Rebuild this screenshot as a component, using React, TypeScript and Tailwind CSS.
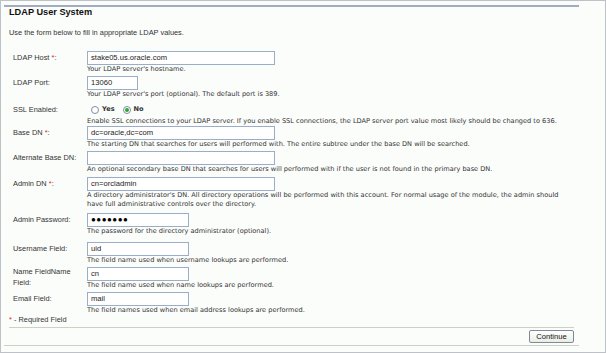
import React from 'react';

const label = "w-[74px] shrink-0 leading-[11px] pt-[1px] text-[7.4px] text-[#333] font-['Liberation_Sans',Arial,sans-serif]";
const hint = "text-[6.6px] leading-[9px] text-[#333] font-['DejaVu_Sans',Verdana,sans-serif] whitespace-nowrap";
const input =
  "h-[14px] border border-[#9aaec8] bg-white px-[3px] text-[7.6px] leading-[12px] text-[#222] font-['Liberation_Sans',Arial,sans-serif]";

function Req() {
  return <span className="text-[#e02020]">*</span>;
}

function Row({
  name,
  required,
  width,
  value,
  help,
  className = '',
}: {
  name: React.ReactNode;
  required?: boolean;
  width: string;
  value: React.ReactNode;
  help: React.ReactNode;
  className?: string;
}) {
  return (
    <div className={`flex ${className}`}>
      <div className={label}>
        {name}
        {required && (
          <>
            {' '}
            <Req />
          </>
        )}
        :
      </div>
      <div>
        <div className={`${input} ${width}`}>{value}</div>
        <div className={hint}>{help}</div>
      </div>
    </div>
  );
}

function Radio({ checked }: { checked?: boolean }) {
  return (
    <span className="inline-flex h-[8px] w-[8px] items-center justify-center rounded-full border border-[#7c8ea6] bg-white">
      {checked && <span className="h-[4px] w-[4px] rounded-full bg-[#2fa52f]" />}
    </span>
  );
}

export default function App() {
  return (
    <div className="h-[353px] w-[606px] overflow-hidden border border-[#bfc1c8] bg-[#fbfdfb] font-['Liberation_Sans',Arial,sans-serif] text-[#333]">
      <div className="ml-[3px] mt-[4px] w-[575px]">
        <div className="border-t-2 border-[#a3abc3]" />
        <h1 className="pl-[5px] text-[9.2px] font-bold leading-[10px] text-[#111]">LDAP User System</h1>
        <p className="mt-[10px] pl-[5px] text-[7.4px] leading-[11px]">
          Use the form below to fill in appropriate LDAP values.
        </p>

        <div className="mt-[13px] flex flex-col gap-[2px] pl-[9px]">
          <Row
            name="LDAP Host"
            required
            width="w-[188px]"
            value="stake05.us.oracle.com"
            help="Your LDAP server's hostname."
          />
          <Row
            name="LDAP Port"
            width="w-[51px]"
            value="13060"
            help="Your LDAP server's port (optional). The default port is 389."
          />
          <div className="mt-[2px] flex">
            <div className={label}>SSL Enabled:</div>
            <div>
              <div className="flex h-[14px] items-center gap-[3px] pl-[4px] font-['DejaVu_Sans',Verdana,sans-serif] text-[6.6px] font-bold text-[#333]">
                <Radio />
                <span>Yes</span>
                <span className="ml-[2px]" />
                <Radio checked />
                <span>No</span>
              </div>
              <div className={hint}>
                Enable SSL connections to your LDAP server. If you enable SSL connections, the LDAP server port value
                most likely should be changed to 636.
              </div>
            </div>
          </div>
          <Row
            name="Base DN"
            required
            width="w-[188px]"
            className="-mt-[2px]"
            value="dc=oracle,dc=com"
            help="The starting DN that searches for users will performed with. The entire subtree under the base DN will be searched."
          />
          <Row
            name="Alternate Base DN"
            width="w-[188px]"
            value=""
            help="An optional secondary base DN that searches for users will performed with if the user is not found in the primary base DN."
          />
          <Row
            name="Admin DN"
            required
            width="w-[188px]"
            className="mt-[1px]"
            value="cn=orcladmin"
            help={
              <>
                A directory administrator's DN. All directory operations will be performed with this account. For normal
                usage of the module, the admin should
                <br />
                have full administrative controls over the directory.
              </>
            }
          />
          <Row
            name="Admin Password"
            width="w-[102px]"
            className="mt-[2px]"
            value={<span className="text-[8px] font-bold tracking-[0.5px] text-black">●●●●●●●</span>}
            help="The password for the directory administrator (optional)."
          />
          <Row
            name="Username Field"
            width="w-[102px]"
            className="mt-[4px]"
            value="uid"
            help="The field name used when username lookups are performed."
          />
          <div className="-mt-[2px] flex">
            <div className={label}>
              Name FieldName
              <br />
              Field:
            </div>
            <div className="pt-[2px]">
              <div className={`${input} w-[102px]`}>cn</div>
              <div className={hint}>The field name used when name lookups are performed.</div>
            </div>
          </div>
          <Row
            name="Email Field"
            width="w-[102px]"
            value="mail"
            help="The field names used when email address lookups are performed."
          />
        </div>

        <div className="pl-[5px] text-[7.4px] leading-[10px]">
          <Req /> - Required Field
        </div>
        <div className="mx-[5px] mt-[2px] border-t border-[#cfd0c4]" />
        <div className="mt-[2px] flex justify-end pr-[5px]">
          <button className="h-[13px] w-[45px] rounded-[2px] border border-[#7d8a9c] bg-gradient-to-b from-white to-[#ecece6] text-[7.6px] leading-[11px] text-[#111]">
            Continue
          </button>
        </div>
        <div className="mt-[2px] border-t border-[#cfd0c4]" />
      </div>
    </div>
  );
}
